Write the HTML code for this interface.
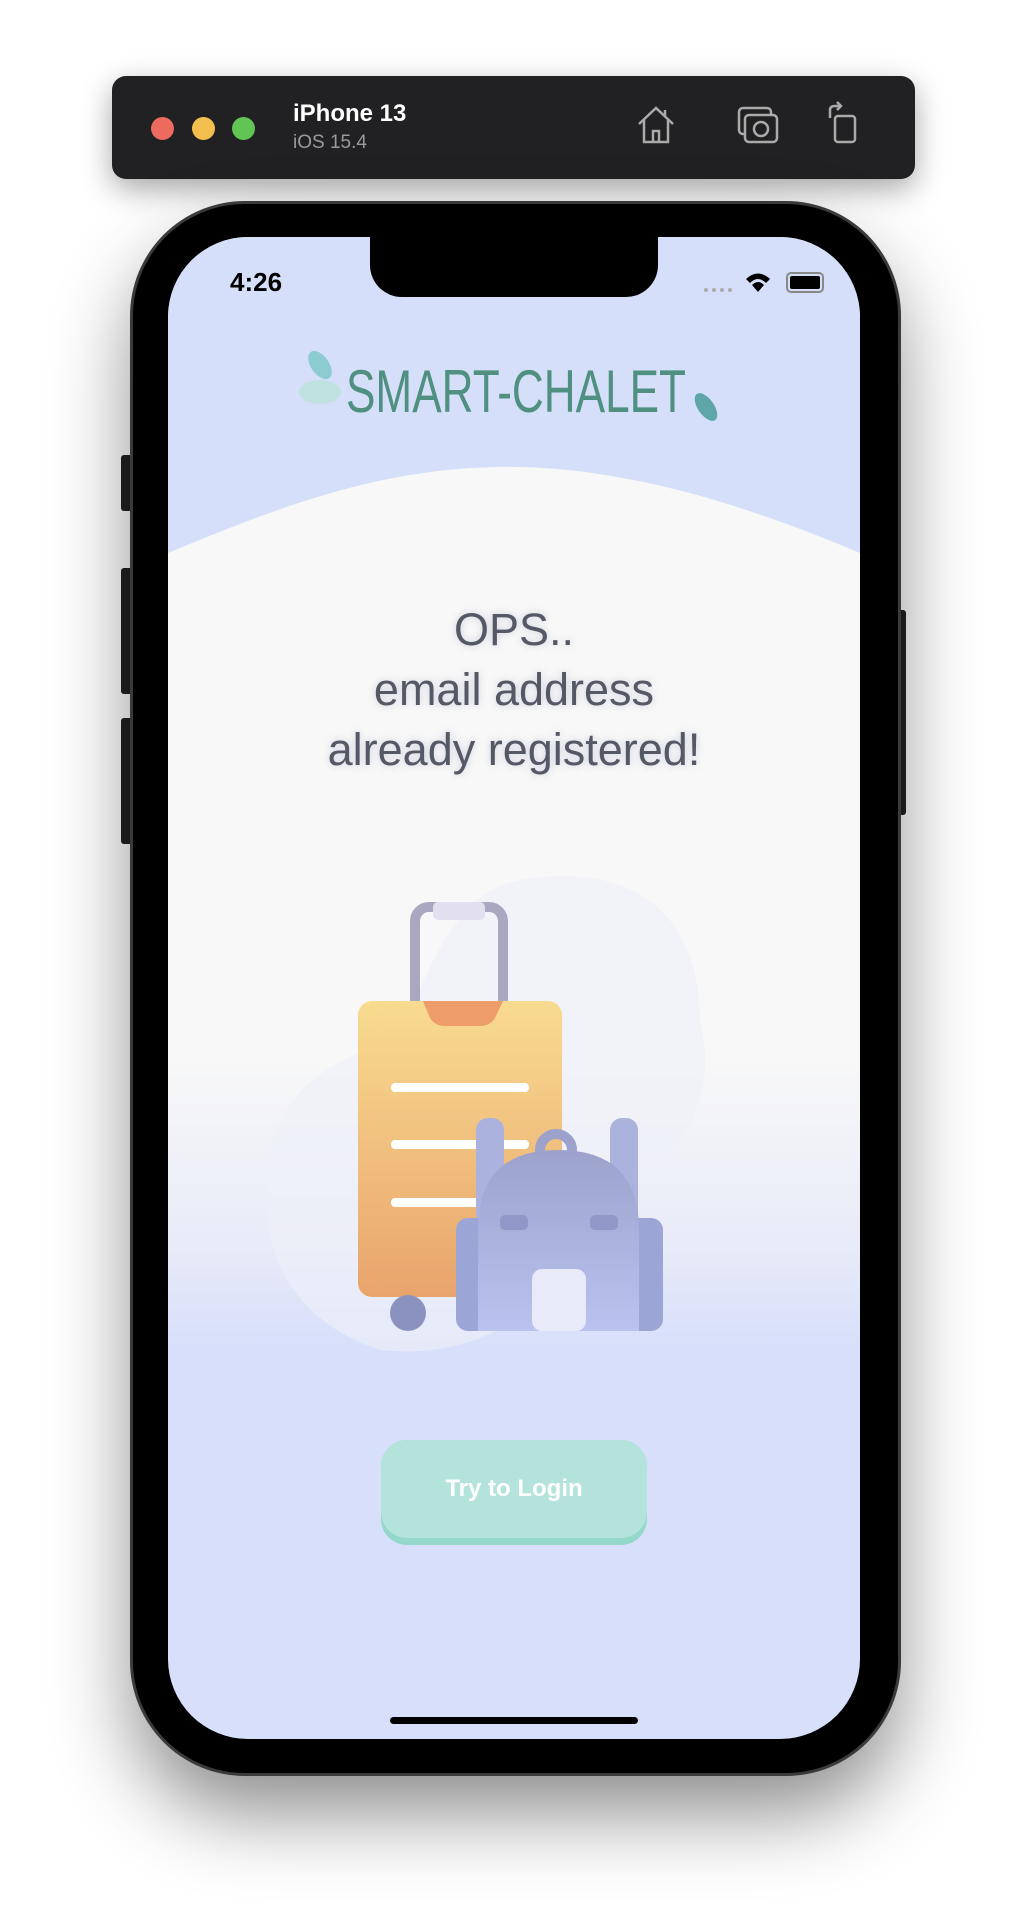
<!DOCTYPE html>
<html><head><meta charset="utf-8"><style>
html,body{margin:0;padding:0;}
body{width:1030px;height:1932px;background:#fff;position:relative;overflow:hidden;font-family:"Liberation Sans",sans-serif;}
.tb{position:absolute;left:112px;top:76px;width:803px;height:103px;background:#212123;border-radius:14px;box-shadow:0 10px 30px rgba(0,0,0,.35);}
.dot{position:absolute;top:41px;width:23px;height:23px;border-radius:50%;}
.phone{position:absolute;left:133px;top:204px;width:765px;height:1569px;background:#000;border-radius:112px;box-shadow:0 0 0 3px #3a3a3a,0 40px 80px rgba(0,0,0,.45);}
.screen{position:absolute;left:168px;top:237px;width:692px;height:1502px;border-radius:80px;overflow:hidden;background:linear-gradient(#f8f8f8 0,#f8f8f8 820px,#e8ebf8 1010px,#d7dffa 1110px,#d7dffa 100%);}
.notch{position:absolute;left:202px;top:0;width:288px;height:60px;background:#000;border-radius:0 0 32px 32px;}
.t{position:absolute;left:0;width:692px;text-align:center;color:#555865;font-size:45px;text-shadow:0 0 8px rgba(120,130,170,.35);}
.btn{position:absolute;left:213px;top:1203px;width:266px;height:105px;border-radius:26px;background:#93d8c8;}
.btn div{height:98px;border-radius:26px;background:#b3e3db;color:#fff;font-size:24px;font-weight:bold;text-align:center;line-height:98px;}
.side{position:absolute;background:#222;border-radius:3px;}
</style></head><body>
<div class="tb">
 <div class="dot" style="left:39px;background:#ec6a5e"></div>
 <div class="dot" style="left:80px;background:#f4bf4f"></div>
 <div class="dot" style="left:120px;background:#61c554"></div>
 <div style="position:absolute;left:181px;top:24px;color:#fff;font-size:24px;font-weight:bold">iPhone 13</div>
 <div style="position:absolute;left:181px;top:56px;color:#9a9a9a;font-size:19px">iOS 15.4</div>
 <svg style="position:absolute;left:523px;top:28px" width="42" height="42" viewBox="0 0 42 42" fill="none" stroke="#aaa" stroke-width="2.5"><path d="M4 20 L21 4 L38 20 M9 16 V38 H33 V16 M18 38 V27 H24 V38"/><path d="M30 6 V12"/></svg>
 <svg style="position:absolute;left:624px;top:28px" width="44" height="42" viewBox="0 0 44 42" fill="none" stroke="#aaa" stroke-width="2.5"><rect x="3" y="4" width="32" height="26" rx="4"/><rect x="9" y="11" width="32" height="27" rx="4" fill="#212123"/><circle cx="25" cy="25" r="7"/></svg>
 <svg style="position:absolute;left:712px;top:24px" width="36" height="46" viewBox="0 0 36 46" fill="none" stroke="#aaa" stroke-width="2.5"><rect x="11" y="16" width="20" height="26" rx="3"/><path d="M6 18 V10 Q6 6 11 6 H16 M13 2 L17 6 L13 10"/></svg>
</div>
<div class="side" style="left:121px;top:455px;width:12px;height:56px"></div>
<div class="side" style="left:121px;top:568px;width:12px;height:126px"></div>
<div class="side" style="left:121px;top:718px;width:12px;height:126px"></div>
<div class="side" style="left:897px;top:610px;width:9px;height:205px"></div>
<div class="phone"></div>
<div class="screen">
 <svg style="position:absolute;left:0;top:0" width="692" height="330"><path d="M0 0 H692 V316 C560 260 440 228 330 230 C210 232 110 270 0 316 Z" fill="#d6dffa"/></svg>
 <div class="notch"></div>
 <div style="position:absolute;left:62px;top:30px;font-size:26px;font-weight:bold;color:#000">4:26</div>
 <div style="position:absolute;left:536px;top:51px;width:28px;height:4px;border-top:4px dotted #aaa"></div>
 <svg style="position:absolute;left:576px;top:33px" width="28" height="24" viewBox="0 0 28 24"><path d="M2 9 Q14 -2 26 9 L22 13 Q14 5 6 13Z M8 15 Q14 9 20 15 L14 22Z" fill="#000"/></svg>
 <div style="position:absolute;left:618px;top:35px;width:34px;height:17px;border:2px solid #888;border-radius:5px;"><div style="margin:2px;height:13px;background:#000;border-radius:2px"></div></div>
 <svg style="position:absolute;left:130px;top:110px" width="420" height="80" viewBox="0 0 420 80">
  <ellipse cx="22" cy="18" rx="9" ry="16" fill="#8ccbd0" transform="rotate(-35 22 18)"/>
  <ellipse cx="22" cy="45" rx="21" ry="12" fill="#bfe1e0"/>
  <ellipse cx="408" cy="60" rx="8" ry="16" fill="#5ea6a8" transform="rotate(-35 408 60)"/>
  <text x="218" y="65" text-anchor="middle" font-family="Liberation Sans Narrow,Liberation Sans,sans-serif" font-size="60" fill="#4f9080" textLength="340" lengthAdjust="spacingAndGlyphs">SMART-CHALET</text>
 </svg>
 <div class="t" style="top:367px">OPS..</div>
 <div class="t" style="top:427px">email address</div>
 <div class="t" style="top:487px">already registered!</div>
 <svg style="position:absolute;left:90px;top:620px" width="520" height="520" viewBox="258 857 520 520">
  <defs>
   <linearGradient id="sg" x1="0" y1="0" x2="0" y2="1"><stop offset="0" stop-color="#f8db90"/><stop offset="1" stop-color="#e9a46c"/></linearGradient>
   <linearGradient id="bg" x1="0" y1="0" x2="0" y2="1"><stop offset="0" stop-color="#9ca2cc"/><stop offset="1" stop-color="#b9c3ee"/></linearGradient>
  </defs>
  <path d="M520 880 C640 860 700 920 700 1020 C720 1100 680 1170 600 1200 C560 1320 470 1360 380 1350 C290 1320 260 1250 268 1180 C270 1100 320 1060 400 1040 C430 960 460 890 520 880Z" fill="#eef0f8" opacity=".6"/>
  <rect x="415" y="907" width="88" height="110" rx="14" fill="none" stroke="#aaa8c0" stroke-width="10"/>
  <rect x="433" y="902" width="52" height="18" rx="5" fill="#e2e0ee"/>
  <rect x="358" y="1001" width="204" height="296" rx="14" fill="url(#sg)"/>
  <path d="M423 1001 H503 L495 1018 Q490 1026 480 1026 H445 Q435 1026 430 1018Z" fill="#ee9d6a"/>
  <rect x="391" y="1083" width="138" height="9" rx="4" fill="#fff"/>
  <rect x="391" y="1140" width="138" height="9" rx="4" fill="#fff"/>
  <rect x="391" y="1198" width="138" height="9" rx="4" fill="#fff"/>
  <circle cx="408" cy="1313" r="18" fill="#8c92bf"/>
  <rect x="476" y="1118" width="28" height="110" rx="12" fill="#aab2dd"/>
  <rect x="610" y="1118" width="28" height="110" rx="12" fill="#aab2dd"/>
  <circle cx="556" cy="1150" r="16" fill="none" stroke="#9ca2cc" stroke-width="10"/>
  <rect x="456" y="1218" width="207" height="113" rx="12" fill="#9ca6d6"/>
  <path d="M478 1230 Q478 1150 558 1150 Q639 1150 639 1230 V1331 H478Z" fill="url(#bg)"/>
  <rect x="500" y="1215" width="28" height="15" rx="5" fill="#9098c8"/>
  <rect x="590" y="1215" width="28" height="15" rx="5" fill="#9098c8"/>
  <rect x="532" y="1269" width="54" height="62" rx="10" fill="#e8eafa"/>
 </svg>
 <div class="btn"><div>Try to Login</div></div>
 <div style="position:absolute;left:222px;top:1480px;width:248px;height:7px;border-radius:4px;background:#000"></div>
</div>
</body></html>
